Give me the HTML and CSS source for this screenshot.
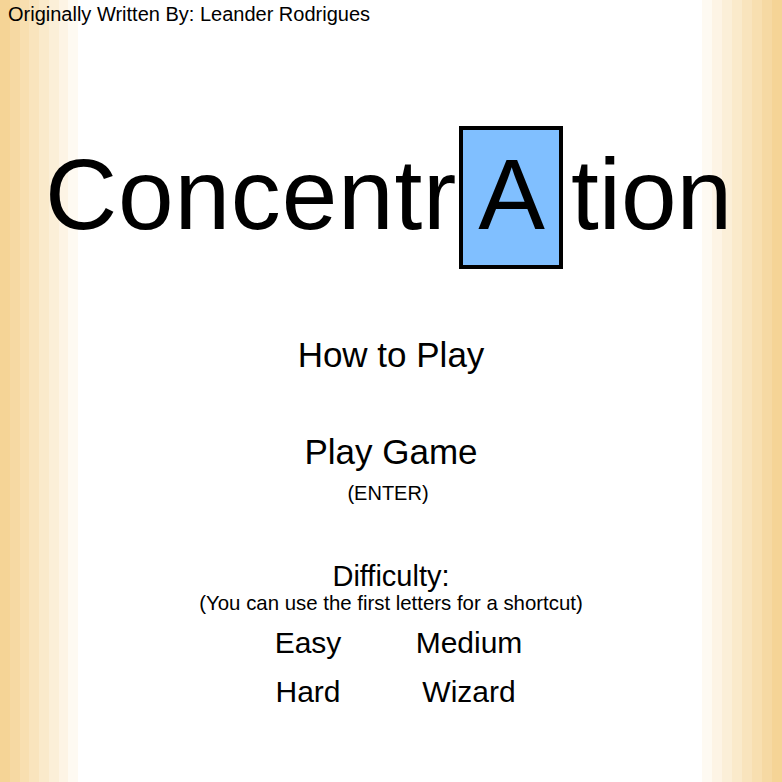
FILE: index.html
```html
<!DOCTYPE html>
<html lang="en">
<head>
<meta charset="utf-8">
<title>ConcentrAtion</title>
<link rel="stylesheet" href="styles.css">
</head>
<body>
<main class="screen">
  <p class="credit">Originally Written By: Leander Rodrigues</p>
  <h1 class="title">
    <span class="title-part title-head">Concentr</span>
    <span class="title-box">A</span>
    <span class="title-part title-tail">tion</span>
  </h1>
  <p class="menu-item how">How to Play</p>
  <p class="menu-item play">Play Game</p>
  <p class="hint enter">(ENTER)</p>
  <p class="difficulty">Difficulty:</p>
  <p class="hint shortcut">(You can use the first letters for a shortcut)</p>
  <div class="options">
    <span class="option">Easy</span>
    <span class="option">Medium</span>
    <span class="option">Hard</span>
    <span class="option">Wizard</span>
  </div>
</main>
</body>
</html>
```
FILE: styles.css
```css
html, body {
  margin: 0;
  padding: 0;
  height: 782px;
  overflow: hidden;
}

body {
  background-color: #ffffff;
  background-image:
    linear-gradient(to right,
      rgb(245,212,150) 0 10px,
      rgb(246,217,163) 10px 20px,
      rgb(248,223,176) 20px 29px,
      rgb(249,228,189) 29px 39px,
      rgb(250,234,203) 39px 49px,
      rgb(251,239,216) 49px 59px,
      rgb(253,244,229) 59px 68px,
      rgb(254,250,242) 68px 78px),
    linear-gradient(to left,
      rgb(245,212,150) 0 10px,
      rgb(246,217,163) 10px 20px,
      rgb(248,223,176) 20px 30px,
      rgb(249,228,189) 30px 40px,
      rgb(250,234,203) 40px 50px,
      rgb(251,239,216) 50px 60px,
      rgb(253,244,229) 60px 70px,
      rgb(254,250,242) 70px 80px);
  background-size: 78px 100%, 80px 100%;
  background-position: left top, right top;
  background-repeat: no-repeat;
  font-family: "Liberation Sans", Arial, sans-serif;
  color: #000;
}

.screen {
  display: flex;
  flex-direction: column;
  height: 782px;
}

.credit {
  margin: 0;
  padding-left: 8px;
  font-size: 20px;
  line-height: 28px;
}

.title {
  margin: 98px 0 0 0;
  padding-left: 45px;
  display: flex;
  align-items: baseline;
  font-size: 100px;
  font-weight: normal;
  line-height: 100px;
}

.title-head {
  letter-spacing: 0.8px;
}

.title-box {
  margin-left: 2px;
  padding: 14px 14px 21px 15px;
  border: 4px solid #000;
  background: #80bfff;
}

.title-tail {
  margin-left: 8px;
}

.menu-item {
  margin: 0;
  text-align: center;
  font-size: 35px;
  line-height: 40px;
}

.how {
  margin-top: 66px;
}

.play {
  margin-top: 57px;
}

.hint {
  margin: 0;
  text-align: center;
  font-size: 20px;
}

.enter {
  margin-top: 9px;
  padding-right: 6px;
  line-height: 24px;
}

.difficulty {
  margin: 57px 0 0 0;
  text-align: center;
  font-size: 29px;
  line-height: 28px;
}

.shortcut {
  margin-top: 3px;
  font-size: 20.4px;
  line-height: 20px;
}

.options {
  margin-top: 5px;
  padding-right: 5px;
  display: grid;
  grid-template-columns: 161px 161px;
  justify-content: center;
  text-align: center;
  font-size: 30px;
  line-height: 49px;
}
```
